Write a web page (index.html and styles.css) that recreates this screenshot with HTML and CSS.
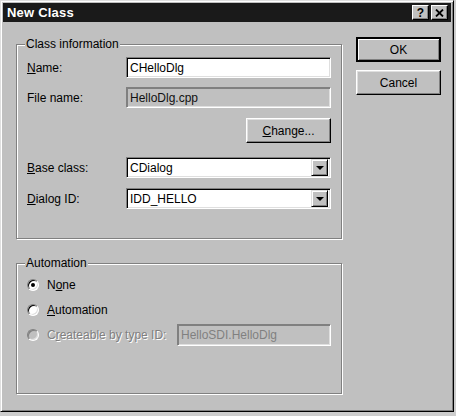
FILE: index.html
```html
<!DOCTYPE html>
<html>
<head>
  <meta charset="utf-8" />
  <title>New Class</title>
  <link rel="stylesheet" href="styles.css">
</head>
<body>
  <div class="window">
    <div class="titlebar">
      <span class="title">New Class</span>
      <div class="caption-buttons">
        <span class="cbtn help">?</span>
        <span class="cbtn">
          <svg width="9" height="8" viewBox="0 0 9 8"><path d="M1 0.5 L8 7.5 M8 0.5 L1 7.5" stroke="#000" stroke-width="1.8"/></svg>
        </span>
      </div>
    </div>

    <div class="client">
      <div class="groups">
        <fieldset class="group info">
          <legend>Class information</legend>
          <div class="row">
            <label><u>N</u>ame:</label>
            <div class="field">CHelloDlg</div>
          </div>
          <div class="row file">
            <label>File name:</label>
            <div class="field readonly">HelloDlg.cpp</div>
          </div>
          <div class="row change">
            <span class="btn"><u>C</u>hange...</span>
          </div>
          <div class="row base">
            <label><u>B</u>ase class:</label>
            <div class="field combo"><span class="value">CDialog</span><span class="drop"></span></div>
          </div>
          <div class="row dialog">
            <label><u>D</u>ialog ID:</label>
            <div class="field combo"><span class="value">IDD_HELLO</span><span class="drop"></span></div>
          </div>
        </fieldset>

        <fieldset class="group auto">
          <legend>Automation</legend>
          <div class="radio-row">
            <span class="radio checked"></span>
            <span class="radio-label">N<u>o</u>ne</span>
          </div>
          <div class="radio-row">
            <span class="radio"></span>
            <span class="radio-label"><u>A</u>utomation</span>
          </div>
          <div class="radio-row disabled">
            <span class="radio"></span>
            <span class="radio-label">C<u>r</u>eateable by type ID:</span>
            <div class="field readonly type-id">HelloSDI.HelloDlg</div>
          </div>
        </fieldset>
      </div>

      <div class="actions">
        <span class="btn default">OK</span>
        <span class="btn">Cancel</span>
      </div>
    </div>
  </div>
</body>
</html>
```

FILE: styles.css
```css
html, body {
  margin: 0;
  padding: 0;
}

body {
  background: #cdcdcd;
  font-family: "Liberation Sans", Arial, sans-serif;
  font-size: 12px;
  color: #000;
}

.window {
  width: 454px;
  height: 412px;
  box-sizing: border-box;
  background: #c0c0c0;
  border: 1px solid;
  border-color: #dfdfdf #000 #000 #dfdfdf;
  box-shadow: inset 1px 1px 0 #fff, inset -1px -1px 0 #808080;
  padding: 2px;
  display: flex;
  flex-direction: column;
}

/* title bar */
.titlebar {
  height: 19px;
  flex: none;
  background: #1a1a1a;
  color: #fff;
  display: flex;
  align-items: center;
  justify-content: space-between;
  padding: 0 3px 0 4px;
}

.title {
  font-weight: bold;
  font-size: 13px;
  letter-spacing: 0.2px;
}

.caption-buttons {
  display: flex;
  gap: 2px;
}

.cbtn {
  width: 17px;
  height: 15px;
  box-sizing: border-box;
  background: #c0c0c0;
  border: 1px solid;
  border-color: #fff #000 #000 #fff;
  box-shadow: inset -1px -1px 0 #808080;
  display: flex;
  align-items: center;
  justify-content: center;
  color: #000;
}

.cbtn.help {
  font-weight: bold;
  font-size: 12px;
  line-height: 1;
}

/* client area */
.client {
  flex: 1;
  display: flex;
  gap: 14px;
  padding: 15px 11px 0 13px;
}

.groups {
  width: 326px;
  display: flex;
  flex-direction: column;
}

.group {
  margin: 0;
  padding: 6px 10px 29px;
  border: 1px solid #808080;
  box-shadow: 1px 1px 0 #fff, inset 1px 1px 0 #fff;
  min-width: 0;
}

.group legend {
  padding: 0 1px;
  margin-left: -2px;
  line-height: 14px;
  background: #c0c0c0;
}

.group.auto {
  margin-top: 17px;
  padding: 2px 10px 46px;
}

/* rows */
.row {
  display: flex;
  align-items: center;
  height: 21px;
}

.row label {
  width: 99px;
  flex: none;
}

.row.file { margin-top: 9px; }
.row.change { margin-top: 10px; height: 25px; justify-content: flex-end; }
.row.base { margin-top: 14px; }
.row.dialog { margin-top: 10px; }

/* sunken fields */
.field {
  width: 205px;
  height: 21px;
  box-sizing: border-box;
  background: #fff;
  border: 1px solid;
  border-color: #808080 #fff #fff #808080;
  box-shadow: inset 1px 1px 0 #000, inset -1px -1px 0 #dfdfdf;
  padding: 0 3px;
  display: flex;
  align-items: center;
  font-size: 12px;
}

.field.readonly {
  background: #c0c0c0;
  box-shadow: inset 1px 1px 0 #808080, inset -1px -1px 0 #dfdfdf;
  color: #111;
}

.combo {
  padding: 0 2px 0 3px;
}

.combo .value {
  flex: 1;
}

.combo .drop {
  width: 17px;
  height: 17px;
  box-sizing: border-box;
  background: #c0c0c0;
  border: 1px solid;
  border-color: #dfdfdf #000 #000 #dfdfdf;
  box-shadow: inset 1px 1px 0 #fff, inset -1px -1px 0 #808080;
  display: flex;
  align-items: center;
  justify-content: center;
}

.combo .drop::after {
  content: "";
  border-left: 4px solid transparent;
  border-right: 4px solid transparent;
  border-top: 4px solid #000;
  margin-top: 1px;
}

/* push buttons */
.btn {
  width: 85px;
  height: 25px;
  box-sizing: border-box;
  background: #c0c0c0;
  border: 1px solid;
  border-color: #fff #000 #000 #fff;
  box-shadow: inset -1px -1px 0 #808080, inset 1px 1px 0 #dfdfdf;
  display: flex;
  align-items: center;
  justify-content: center;
}

.btn.default {
  border: 2px solid #000;
  box-shadow: inset 1px 1px 0 #fff, inset -1px -1px 0 #808080;
}

.actions {
  display: flex;
  flex-direction: column;
  gap: 8px;
}

/* radios */
.radio-row {
  display: flex;
  align-items: center;
  height: 25px;
}

.radio {
  width: 12px;
  height: 12px;
  box-sizing: border-box;
  border-radius: 50%;
  background: #fff;
  border: 1px solid;
  border-color: #808080 #fff #fff #808080;
  box-shadow: inset 1px 1px 0 #000, inset -1px -1px 0 #dfdfdf;
  margin-right: 8px;
  display: flex;
  align-items: center;
  justify-content: center;
}

.radio.checked::after {
  content: "";
  width: 4px;
  height: 4px;
  border-radius: 50%;
  background: #000;
}

.disabled .radio {
  background: #c0c0c0;
  box-shadow: inset 1px 1px 0 #808080, inset -1px -1px 0 #dfdfdf;
}

.disabled .radio-label {
  color: #808080;
  text-shadow: 1px 1px 0 #fff;
}

.field.type-id {
  margin-left: auto;
  width: 154px;
  height: 22px;
  color: #808080;
}
```
